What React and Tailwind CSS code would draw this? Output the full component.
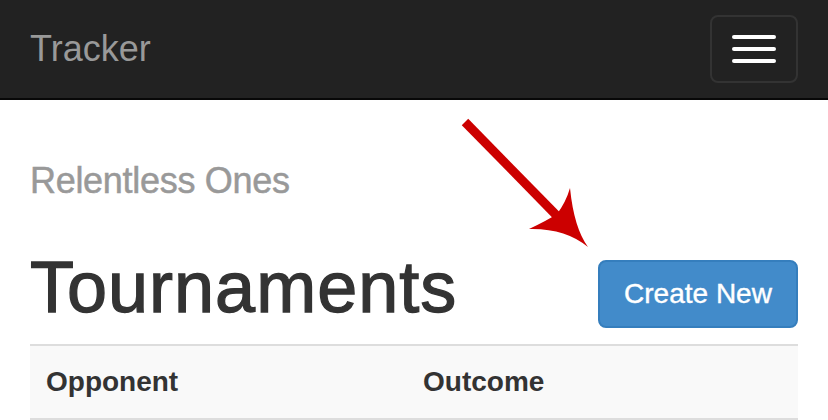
import React from "react";

const font = { fontFamily: '"Liberation Sans", Arial, Helvetica, sans-serif' };

function Navbar() {
  return (
    <nav className="flex h-[100px] items-center justify-between border-b-2 border-[#080808] bg-[#222] px-[30px]">
      <a className="text-[36px] leading-[36px] text-[#999]">Tracker</a>
      <button className="flex h-[68px] w-[88px] flex-col items-center justify-center gap-[8px] rounded-[8px] border-2 border-[#333]">
        <span className="block h-[4px] w-[44px] rounded-[2px] bg-white" />
        <span className="block h-[4px] w-[44px] rounded-[2px] bg-white" />
        <span className="block h-[4px] w-[44px] rounded-[2px] bg-white" />
      </button>
    </nav>
  );
}

// red annotation arrow pointing at the button
function Arrow() {
  return (
    <svg
      className="pointer-events-none absolute left-0 top-0"
      width="828"
      height="420"
      viewBox="0 0 828 420"
    >
      <line x1="465" y1="122" x2="562" y2="221" stroke="#cc0000" strokeWidth="9" />
      <path
        d="M570 188 Q574 228 588 247 Q565 228 529 229 Q548 220 557 214 Q566 202 570 188 Z"
        fill="#cc0000"
      />
    </svg>
  );
}

export default function App() {
  return (
    <div className="relative h-[420px] w-[828px] overflow-hidden bg-white" style={font}>
      <Navbar />
      <main className="px-[30px]">
        <h4 className="mt-[61px] text-[36px] leading-[40px] tracking-[-0.3px] text-[#999] [-webkit-text-stroke:0.5px_#999]">
          Relentless Ones
        </h4>
        <div className="mt-[46px] flex items-start justify-between">
          <h1 className="text-[72px] leading-[80px] tracking-[1px] text-[#333] [-webkit-text-stroke:1.3px_#333]">
            Tournaments
          </h1>
          <button className="mt-[13px] flex h-[68px] w-[200px] items-center justify-center rounded-[8px] border-2 border-[#357ebd] bg-[#428bca] text-[28px] text-white [-webkit-text-stroke:0.4px_#fff]">
            Create New
          </button>
        </div>
        <table className="mt-[16px] w-full border-separate border-spacing-0 text-left text-[28px] text-[#333]">
          <thead>
            <tr className="bg-[#f9f9f9]">
              <th className="w-[377px] border-y-2 border-[#ddd] p-0 font-bold">
                <div className="flex h-[72px] items-center px-[16px]">Opponent</div>
              </th>
              <th className="border-y-2 border-[#ddd] p-0 font-bold">
                <div className="flex h-[72px] items-center px-[16px]">Outcome</div>
              </th>
            </tr>
          </thead>
        </table>
      </main>
      <Arrow />
    </div>
  );
}
